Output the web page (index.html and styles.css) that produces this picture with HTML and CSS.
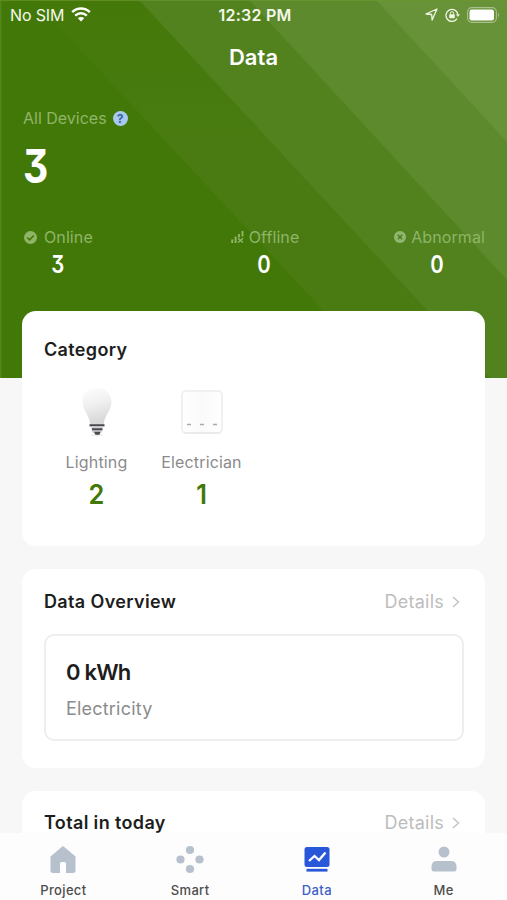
FILE: index.html
```
<!DOCTYPE html>
<html lang="en">
<head>
<meta charset="utf-8">
<title>Data</title>
<link rel="stylesheet" href="styles.css">
</head>
<body>
<div class="app">
  <svg class="backdrop" viewBox="0 0 507 378" aria-hidden="true">
    <defs><linearGradient id="band" x1="0" y1="0" x2="0" y2="1"><stop offset="0" stop-color="#447909"/><stop offset=".4" stop-color="#497b12"/></linearGradient></defs>
    <rect width="507" height="378" fill="#427807"/>
    <path d="M34 0H507V378H386Z" fill="url(#band)"/>
    <path d="M139 0H507V378H490Z" fill="#51821e"/>
    <path d="M249 0H507V280Z" fill="#5c8a2c"/>
    <path d="M376 0H507V142Z" fill="#679237"/>
    <path d="M0 .5H507" stroke="#70982f" stroke-opacity=".6"/>
    <path d="M.75 0V378" stroke="#60902c" stroke-opacity=".6" stroke-width="1.5"/>
  </svg>
  <header class="status">
    <div class="carrier"><span>No SIM</span>
      <svg width="20" height="15" viewBox="0 0 20 15" fill="none" stroke="#fff"><path d="M1.2 5.2C6.2.4 13.8.4 18.8 5.2" stroke-width="2.5"/><path d="M4.2 8.7C7.5 5.5 12.5 5.5 15.8 8.7" stroke-width="2.4"/><path d="M6.8 11.3a4.5 4.5 0 0 1 6.4 0L10 14.6Z" fill="#fff" stroke="none"/></svg>
    </div>
    <span class="time">12:32 PM</span>
    <div class="indicators">
      <svg width="13" height="13" viewBox="0 0 13 13" fill="none" stroke="#f1f6e6" stroke-width="1.3" stroke-linejoin="round"><path d="M12 1 1 6l5.7.5L7.1 12Z"/></svg>
      <svg width="15" height="14" viewBox="0 0 15 14" fill="none" stroke="#f1f6e6"><path d="M12 10.7A6 6 0 1 1 12.8 6" stroke-width="1.3"/><path d="M10.900 6.200h4l-2 2.900Z" fill="#f1f6e6" stroke="none"/><rect x="4.200" y="6.300" width="5.600" height="4" rx=".7" fill="#f1f6e6" stroke="none"/><path d="M5.400 6.700V5.300a1.600 1.600 0 0 1 3.200 0v1.400"/></svg>
      <svg width="33" height="16" viewBox="0 0 33 16"><rect x=".6" y=".6" width="28.800" height="14.800" rx="4.300" fill="none" stroke="#a9c08f" stroke-width="1.100"/><rect x="2.500" y="2.500" width="24.500" height="11" rx="2.300" fill="#fff"/><path d="M31 5.500q2 2.500 0 5Z" fill="#a9c08f"/></svg>
    </div>
  </header>
  <h1 class="title">Data</h1>
  <section class="summary">
    <div class="all"><span>All Devices</span>
      <span class="help">?</span>
    </div>
    <div class="total"><span class="num">3</span></div>
    <div class="stats">
      <div class="stat online">
        <div class="label"><svg width="13" height="13" viewBox="0 0 12 12"><circle cx="6" cy="6" r="6" fill="#8fb567"/><path d="m3 6 2.200 2.100L9 4.200" fill="none" stroke="#427807" stroke-width="1.500"/></svg><span>Online</span></div>
        <span class="num">3</span>
      </div>
      <div class="stat offline">
        <div class="label"><svg width="13" height="12" viewBox="0 0 13 12" stroke="#8fb567" fill="none"><path d="M1.200 8.500V12M4.600 5.500V12M8 3V6.500M11.500 0V5.500" stroke-width="1.900"/><path d="m7 7.300 5 4.200m0-4.200-5 4.200" stroke-width="1.500"/></svg><span>Offline</span></div>
        <span class="num">0</span>
      </div>
      <div class="stat abnormal">
        <div class="label"><svg width="12" height="12" viewBox="0 0 12 12"><circle cx="6" cy="6" r="6" fill="#93b572"/><path d="m3.800 3.800 4.400 4.400m0-4.400L3.800 8.200" stroke="#4d801a" stroke-width="1.500"/></svg><span>Abnormal</span></div>
        <span class="num">0</span>
      </div>
    </div>
  </section>
  <main class="cards">
    <section class="card category">
      <h2>Category</h2>
      <div class="kinds">
        <div class="kind">
          <svg width="46" height="50" viewBox="0 0 46 50"><defs><linearGradient id="bulb" x1="0" y1="0" x2=".2" y2="1"><stop offset="0" stop-color="#fefefe"/><stop offset=".5" stop-color="#f0f0f0"/><stop offset="1" stop-color="#d8d8d8"/></linearGradient></defs><ellipse cx="23" cy="48" rx="7" ry="1.200" fill="#eee"/><path d="M23 1C14 1 8.500 7 8.500 14.500 8.500 24 15 27 16.200 37H29.800C31 27 37.500 24 37.500 14.500 37.500 7 32 1 23 1Z" fill="url(#bulb)"/><path d="M15.500 37.200H30.500V39.400H15.500Z" fill="#484a52"/><path d="M17 39.500H29L28 45 23 48 18 45Z" fill="#d2d2d4"/><path d="M18 41.300H28.500V43.200H18ZM20 44.800H26.500L25.500 47.700H21.500Z" fill="#484a52"/></svg>
          <span class="name">Lighting</span><span class="num">2</span>
        </div>
        <div class="kind">
          <svg width="46" height="50" viewBox="0 0 46 50"><defs><linearGradient id="panel"><stop offset="0" stop-color="#fff"/><stop offset=".5" stop-color="#fafafa"/><stop offset="1" stop-color="#fff"/></linearGradient></defs><rect x="3" y="4" width="40" height="42" rx="4" fill="url(#panel)" stroke="#f0f0f0" stroke-width="2"/><path d="M5 46H41" stroke="#e6e6e6"/><path d="M8 37.500h4M21 37.500h4M34 37.500h4" stroke="#aaa" stroke-width="1.700"/></svg>
          <span class="name">Electrician</span><span class="num">1</span>
        </div>
      </div>
    </section>
    <section class="card overview">
      <div class="head"><h2>Data Overview</h2><div class="details"><span>Details</span><svg width="8" height="12" viewBox="0 0 8 12" fill="none" stroke="#c4c4c4" stroke-width="1.500"><path d="m1 1 5.500 5L1 11"/></svg></div></div>
      <div class="metric"><span class="value">0 kWh</span><span class="unit">Electricity</span></div>
    </section>
    <section class="card today">
      <div class="head"><h2>Total in today</h2><div class="details"><span>Details</span><svg width="8" height="12" viewBox="0 0 8 12" fill="none" stroke="#c4c4c4" stroke-width="1.500"><path d="m1 1 5.500 5L1 11"/></svg></div></div>
    </section>
  </main>
  <nav class="tabs">
    <div class="tab"><svg width="28" height="30" viewBox="0 0 28 30"><path d="M12.700 1.900Q14 .7 15.300 1.900L26.500 11.500V25.500Q26.500 28 24 28H17V18.500Q17 17 15.500 17H12.500Q11 17 11 18.500V28H4Q1.500 28 1.500 25.500V11.500Z" fill="#b7c1ce"/></svg><span>Project</span></div>
    <div class="tab"><svg width="28" height="30" viewBox="0 0 28 30" fill="#b7c1ce"><circle cx="14" cy="5" r="4.100"/><circle cx="4.500" cy="14.500" r="4.100"/><circle cx="23.500" cy="14.500" r="4.100"/><circle cx="14" cy="24" r="4.100"/></svg><span>Smart</span></div>
    <div class="tab active"><svg width="28" height="30" viewBox="0 0 28 30"><rect x="1.500" y="2" width="25" height="20" rx="2.500" fill="#2858d9"/><path d="m6 16 5.500-5 4.500 4 6.500-7.500" fill="none" stroke="#fff" stroke-width="2.300"/><path d="M3.500 25.200H24.500" stroke="#2858d9" stroke-width="2.800"/></svg><span>Data</span></div>
    <div class="tab"><svg width="28" height="30" viewBox="0 0 28 30" fill="#b7c1ce"><circle cx="14" cy="7" r="5.500"/><path d="M1.500 21.500Q1.500 16 7 16H21Q26.500 16 26.500 21.500V24Q26.500 26.500 24 26.500H4Q1.500 26.500 1.500 24Z"/></svg><span>Me</span></div>
  </nav>
</div>
</body>
</html>
```
FILE: styles.css
```
* { box-sizing: border-box; }
body { margin: 0; font-family: Inter, "Liberation Sans", sans-serif; color: #1d1d1d; }
svg { display: block; flex: none; }
h1, h2 { margin: 0; font-weight: 600; }
.app { position: relative; width: 507px; height: 900px; overflow: hidden; background: #f7f7f7; display: flex; flex-direction: column; }
.backdrop { position: absolute; top: 0; left: 0; width: 507px; height: 378px; }
.status, .title, .summary, .cards { position: relative; }
.status { height: 29px; flex: none; padding: 0 7px 0 10px; display: grid; grid-template-columns: 1fr auto 1fr; align-items: center; color: #f4f8ea; font-size: 16px; }
.carrier { display: flex; align-items: center; gap: 7px; letter-spacing: -.15px; }
.time { font-weight: 600; letter-spacing: .25px; }
.indicators { display: flex; justify-content: flex-end; align-items: center; gap: 7px; }
.title { height: 56px; flex: none; line-height: 57px; text-align: center; font-size: 22px; color: #fff; }
.summary { flex: none; height: 226px; padding: 23px 22px 0 23px; color: #fff; }
.all { display: flex; align-items: center; gap: 6px; height: 20px; font-size: 16px; color: #8fb567; }
.help { width: 15px; height: 15px; border-radius: 50%; background: #a9c8ed; color: #31659b; font-size: 12px; line-height: 15px; font-weight: 700; text-align: center; }
.num { font-weight: 600; font-feature-settings: "cv09"; display: inline-block; transform: scaleX(.85); }
.total { height: 76px; font-size: 46px; line-height: 76px; }
.total .num { font-weight: 700; transform-origin: left; }
.stats { display: grid; grid-template-columns: 1fr auto 1fr; margin-top: 15px; }
.stat { display: flex; flex-direction: column; align-items: center; }
.online { justify-self: start; }
.offline { margin-left: 22px; }
.abnormal { justify-self: end; }
.label { display: flex; align-items: center; height: 36px; gap: 7px; font-size: 16px; color: #8fb567; letter-spacing: .1px; }
.online .label { padding-left: 1px; }
.offline .label, .abnormal .label { gap: 5px; }
.stat .num { font-size: 24px; line-height: 20px; }
.offline .num { margin-right: 3px; }
.abnormal .num { margin-right: 5px; }
.cards { display: flex; flex-direction: column; gap: 23px; padding: 0 22px; }
.card { background: #fff; border-radius: 14px; padding: 0 21px 0 22px; }
.card h2 { font-size: 18px; line-height: 24px; letter-spacing: .36px; }
.category { height: 235px; padding-top: 27px; }
.kinds { display: flex; padding-top: 25px; }
.kind { width: 105px; display: flex; flex-direction: column; align-items: center; }
.kind .name { font-size: 16px; line-height: 24px; margin-top: 13px; color: #8b8b8b; letter-spacing: .15px; }
.kind .num { color: #427807; font-size: 27px; line-height: 41px; transform: scaleX(.94); }
.overview { height: 199px; padding-top: 21px; }
.head { display: flex; justify-content: space-between; align-items: center; }
.details { display: flex; align-items: center; gap: 8px; padding-right: 4px; font-size: 18px; line-height: 24px; color: #bdbdbd; letter-spacing: .25px; }
.metric { margin-top: 20px; height: 107px; border: 2px solid #eee; border-radius: 10px; padding: 21px 20px; display: flex; flex-direction: column; }
.value { font-size: 22px; line-height: 30px; font-weight: 600; letter-spacing: -.8px; }
.unit { font-size: 18px; line-height: 24px; margin-top: 10px; color: #8b8b8b; letter-spacing: .2px; }
.today { height: 120px; padding-top: 20px; }
.tabs { position: absolute; left: 0; right: 0; bottom: 0; height: 67px; padding-top: 12px; background: #fdfdfd; display: grid; grid-template-columns: repeat(4, 1fr); }
.tab { display: flex; flex-direction: column; align-items: center; font-size: 13px; font-weight: 500; color: #4d4d4d; letter-spacing: .35px; }
.tab span { line-height: 18px; margin-top: 6px; }
.active { color: #3d5fc7; }
```
